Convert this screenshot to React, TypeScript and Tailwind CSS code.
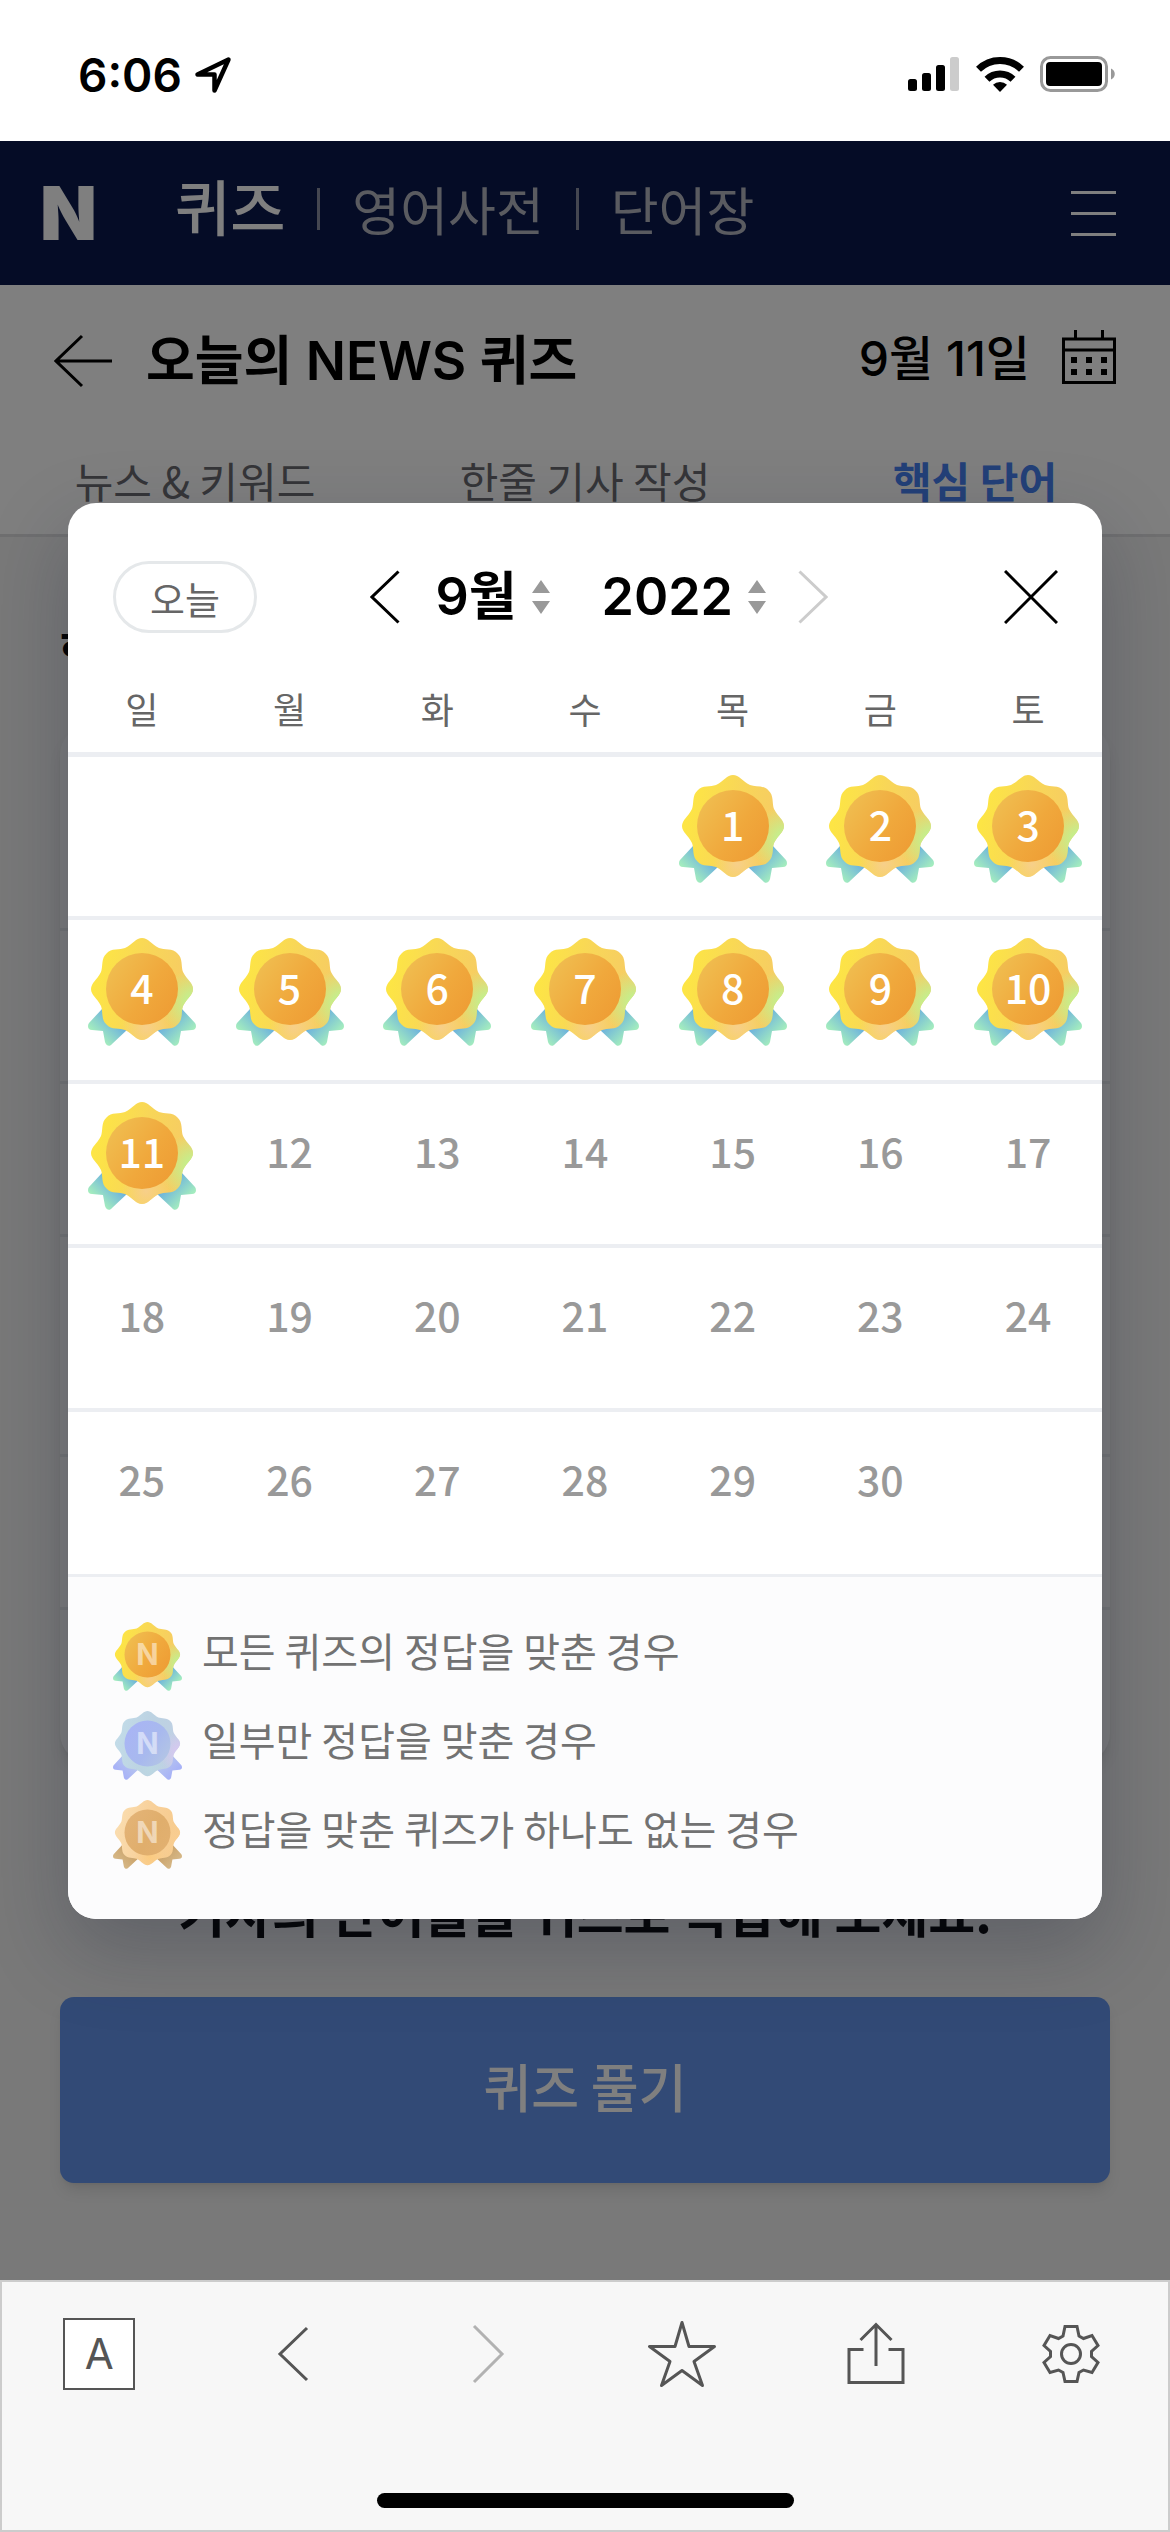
import { useId, useState } from "react";

const FONT = "font-['Inter','Noto_Sans_CJK_KR',sans-serif]";
const FONT_KR = "font-['Noto_Sans_CJK_KR',sans-serif]";

type Tone = "gold" | "blue" | "bronze";

const TONES: Record<Tone, { star: string[]; side: string; foot: string; disc: string[]; ribbon: string[] }> = {
  gold: {
    star: ["#fde545", "#f8d658", "#f6c966"],
    side: "#c3f08e",
    foot: "#f7cf8a",
    disc: ["#f0c052", "#f0a83c", "#ee9c34"],
    ribbon: ["#6fb4dc", "#a6efbd"],
  },
  blue: {
    star: ["#c2dbe8", "#bcd2e2", "#c0d0e4"],
    side: "#d6c8f0",
    foot: "#bcd8e2",
    disc: ["#a9b4f6", "#a8b9ee", "#b4c6e4"],
    ribbon: ["#b4c2f0", "#a6b0f8"],
  },
  bronze: {
    star: ["#fadcae", "#f8d09a", "#f6ca8c"],
    side: "#f9cd90",
    foot: "#fbcb80",
    disc: ["#e4b478", "#e0ae6c", "#e2b070"],
    ribbon: ["#cba46c", "#d6b888"],
  },
};

const STAR_PATH =
  "M0-51C6-51 9-45 17-41C22-39 31-41 35.5-35.5C41-31 39-22 41-17C45-9 51-6 51 0" +
  "C51 6 45 9 41 17C39 22 41 31 35.5 35.5C31 41 22 39 17 41C9 45 6 51 0 51" +
  "C-6 51-9 45-17 41C-22 39-31 41-35.5 35.5C-41 31-39 22-41 17C-45 9-51 6-51 0" +
  "C-51-6-45-9-41-17C-39-22-41-31-35.5-35.5C-31-41-22-39-17-41C-9-45-6-51 0-51Z";

const RIBBON_PATH = "M14 71L1 85C-1 88 0 92 4 92L15 93L17 104C18 108 22 109 24 106L40 91Z";

function Medal({ tone, letter, className }: { tone: Tone; letter?: string; className: string }) {
  const id = useId();
  const t = TONES[tone];
  return (
    <svg viewBox="0 0 108 108" className={className} aria-hidden="true">
      <defs>
        <linearGradient id={`${id}star`} x1="0" y1="0.4" x2="1" y2="0.6">
          <stop offset="0.05" stopColor={t.star[0]} />
          <stop offset="0.5" stopColor={t.star[1]} />
          <stop offset="1" stopColor={t.star[2]} />
        </linearGradient>
        <radialGradient id={`${id}side`} gradientUnits="userSpaceOnUse" cx="52" cy="14" r="34">
          <stop offset="0.2" stopColor={t.side} />
          <stop offset="1" stopColor={t.side} stopOpacity="0" />
        </radialGradient>
        <radialGradient id={`${id}foot`} gradientUnits="userSpaceOnUse" cx="4" cy="38" r="24">
          <stop offset="0" stopColor={t.foot} />
          <stop offset="1" stopColor={t.foot} stopOpacity="0" />
        </radialGradient>
        <linearGradient id={`${id}disc`} x1="0" y1="0.1" x2="1" y2="0.8">
          <stop offset="0" stopColor={t.disc[0]} />
          <stop offset="0.6" stopColor={t.disc[1]} />
          <stop offset="1" stopColor={t.disc[2]} />
        </linearGradient>
        <linearGradient id={`${id}ribbon`} gradientUnits="userSpaceOnUse" x1="26" y1="82" x2="9" y2="99">
          <stop offset="0" stopColor={t.ribbon[0]} />
          <stop offset="1" stopColor={t.ribbon[1]} />
        </linearGradient>
      </defs>
      <path d={RIBBON_PATH} fill={`url(#${id}ribbon)`} />
      <path d={RIBBON_PATH} fill={`url(#${id}ribbon)`} transform="matrix(-1 0 0 1 108 0)" />
      <g transform="translate(54 51)">
        <path d={STAR_PATH} fill={`url(#${id}star)`} />
        <path d={STAR_PATH} fill={`url(#${id}side)`} />
        <path d={STAR_PATH} fill={`url(#${id}foot)`} />
        <circle r="36" fill={`url(#${id}disc)`} />
        {letter && (
          <text y="17" textAnchor="middle" fontSize="46" fontWeight="700" fill="#fff" fillOpacity="0.5">
            {letter}
          </text>
        )}
      </g>
    </svg>
  );
}

function StatusBar() {
  return (
    <div className="flex h-[141px] items-start justify-between bg-white pt-[50px] pr-[54px] pl-[78px]">
      <div className="flex items-center gap-3">
        <span className="text-[46px] leading-[50px] font-semibold">6:06</span>
        <svg viewBox="0 0 38 38" className="size-[38px]" fill="none" stroke="#000" strokeWidth="4.5" strokeLinejoin="round">
          <path d="M34.500 3.500L3.500 18.500H20.500V34.500Z" />
        </svg>
      </div>
      <div className="flex h-12 items-center gap-4">
        <svg viewBox="0 0 52 36" className="h-9 w-[52px]">
          <rect x="0" y="23" width="9" height="12" rx="2.500" />
          <rect x="14" y="17" width="9" height="18" rx="2.500" />
          <rect x="28" y="9" width="9" height="26" rx="2.500" />
          <rect x="42" y="1" width="9" height="34" rx="2.500" fill="#ccc" />
        </svg>
        <svg viewBox="0 0 48 36" className="h-9 w-12">
          <path d="M24 36l-7-7.200a10 10 0 0 1 14 0z" />
          <path d="M11 23.200a18.600 18.600 0 0 1 26 0" fill="none" stroke="#000" strokeWidth="7" />
          <path d="M2.500 13.300a30.500 30.500 0 0 1 43 0" fill="none" stroke="#000" strokeWidth="7" />
        </svg>
        <svg viewBox="0 0 76 36" className="h-9 w-[76px]">
          <rect x="1.500" y="1.500" width="65" height="33" rx="9" fill="none" stroke="#999" strokeWidth="3" />
          <rect x="6" y="6" width="56" height="24" rx="4" />
          <path d="M71 12.500c5 2 5 9 0 11z" fill="#999" />
        </svg>
      </div>
    </div>
  );
}

function SiteHeader() {
  return (
    <header className="flex h-36 items-center bg-[#0a184c] pr-[54px] pl-10">
      <a href="#" className="text-[74px] leading-[144px] font-black text-white">
        N
      </a>
      <nav className={`ml-[78px] flex items-center pb-2 text-[52px] leading-[60px] ${FONT_KR}`}>
        <a href="#" className="pb-2 text-[60px] font-medium text-white">
          퀴즈
        </a>
        <span className="mx-8 h-[42px] w-[3px] bg-[#8a8ea2]" />
        <a href="#" className="font-normal text-[#b4b6c0]">
          영어사전
        </a>
        <span className="mx-8 h-[42px] w-[3px] bg-[#8a8ea2]" />
        <a href="#" className="font-normal text-[#b4b6c0]">
          단어장
        </a>
      </nav>
      <button aria-label="메뉴" className="ml-auto flex flex-col gap-[18px]">
        <span className="h-[3px] w-[45px] bg-white" />
        <span className="h-[3px] w-[45px] bg-white" />
        <span className="h-[3px] w-[45px] bg-white" />
      </button>
    </header>
  );
}

function QuizPage() {
  const rows = ["h-[206px]", "h-[153px]", "h-[153px]", "h-[220px]", "h-[153px]", "h-[153px]"];
  return (
    <div className="bg-[#f2f2f2]">
      <SiteHeader />
      <div className="bg-white">
        <div className="flex h-[152px] items-center pr-[54px] pl-[54px]">
          <button aria-label="뒤로">
            <svg viewBox="0 0 58 54" className="h-[54px] w-[58px]" fill="none" stroke="#000" strokeWidth="3">
              <path d="M28 2L2 27l26 25M2 27h56" />
            </svg>
          </button>
          <h1 className="ml-[34px] text-[53px] leading-[60px] font-semibold">오늘의 NEWS 퀴즈</h1>
          <span className="ml-auto pb-1 text-[48px] leading-[60px] font-medium">9월 11일</span>
          <button aria-label="달력" className="ml-8 pb-2">
            <svg viewBox="0 0 54 54" className="size-[54px]" fill="none" stroke="#000" strokeWidth="3">
              <path d="M1.500 9h51v43.500h-51zM1.500 20h51M13.500 0v9M40.500 0v9" />
              <g fill="#000" stroke="none">
                <path d="M9 27h6v6H9zM24 27h6v6h-6zM39 27h6v6h-6zM9 39h6v6H9zM24 39h6v6h-6zM39 39h6v6h-6z" />
              </g>
            </svg>
          </button>
        </div>
        <nav className={`grid h-[100px] grid-cols-3 border-b-3 border-[#dfdfe0] text-center text-[42px] leading-[86px] text-[#6a6b70] ${FONT_KR}`}>
          <a href="#">뉴스 &amp; 키워드</a>
          <a href="#">한줄 기사 작성</a>
          <a href="#" className="font-bold text-[#4680f0]">
            핵심 단어
          </a>
        </nav>
      </div>
      <div className="px-[60px] pt-[86px] pb-24">
        <h2 className="text-[48px] leading-[60px] font-bold">핵심 단어</h2>
        <div className="mt-[42px] divide-y-3 divide-[#e4e6ea] rounded-[30px] bg-[#f7f7f8] shadow-lg">
          {rows.map((height, i) => (
            <div key={i} className={height} />
          ))}
        </div>
        <p className={`mt-[112px] text-center text-[51px] leading-[72px] font-bold ${FONT_KR}`}>
          기사의 단어들을 퀴즈로 복습해 보세요.
        </p>
        <button className={`mt-[50px] h-[186px] w-full rounded-[14px] bg-[#6494ec] pb-2 text-[52px] font-medium text-white shadow-lg ${FONT_KR}`}>
          퀴즈 풀기
        </button>
      </div>
    </div>
  );
}

function SortArrows() {
  return (
    <svg viewBox="0 0 18 34" className="h-[34px] w-[18px]" fill="#999">
      <path d="M9 0l9 13H0zM9 34l9-13H0z" />
    </svg>
  );
}

const WEEKDAYS = ["일", "월", "화", "수", "목", "금", "토"];
const WEEKS = [
  [0, 0, 0, 0, 1, 2, 3],
  [4, 5, 6, 7, 8, 9, 10],
  [11, 12, 13, 14, 15, 16, 17],
  [18, 19, 20, 21, 22, 23, 24],
  [25, 26, 27, 28, 29, 30, 0],
];
const LAST_SOLVED = 11;

const LEGEND: { tone: Tone; text: string }[] = [
  { tone: "gold", text: "모든 퀴즈의 정답을 맞춘 경우" },
  { tone: "blue", text: "일부만 정답을 맞춘 경우" },
  { tone: "bronze", text: "정답을 맞춘 퀴즈가 하나도 없는 경우" },
];

function CalendarDialog() {
  const [month, setMonth] = useState("9");
  const [year, setYear] = useState("2022");

  return (
    <div
      role="dialog"
      aria-label="달력"
      className="overflow-hidden rounded-[28px] bg-white shadow-[0_30px_80px_rgba(30,36,56,0.28)]"
    >
      <div className="flex items-center justify-between pt-[54px] pr-11 pl-[45px]">
        <button className={`w-36 ${FONT_KR}`}>
          <span className="flex h-[72px] items-center justify-center rounded-full border-3 border-[#e5e8ea] text-[38px] text-[#666]">
            오늘
          </span>
        </button>
        <div className="flex items-center pr-16">
          <button aria-label="이전 달">
            <svg viewBox="0 0 30 54" className="h-[54px] w-[30px]" fill="none" stroke="#000" strokeWidth="3">
              <path d="M28.500 1.500L2 27l26.500 25.500" />
            </svg>
          </button>
          <label className="ml-9 flex items-center">
            <select
              aria-label="월"
              value={month}
              onChange={(e) => setMonth(e.target.value)}
              className="w-[96px] appearance-none text-[52px] leading-[80px] font-semibold"
            >
              {["7", "8", "9"].map((m) => (
                <option key={m} value={m}>
                  {m}월
                </option>
              ))}
            </select>
            <SortArrows />
          </label>
          <label className="ml-[52px] flex items-center">
            <select
              aria-label="연도"
              value={year}
              onChange={(e) => setYear(e.target.value)}
              className="w-[146px] appearance-none text-[52px] leading-[80px] font-semibold"
            >
              {["2021", "2022"].map((y) => (
                <option key={y}>{y}</option>
              ))}
            </select>
            <SortArrows />
          </label>
          <button aria-label="다음 달" className="ml-8">
            <svg viewBox="0 0 30 54" className="h-[54px] w-[30px]" fill="none" stroke="#ccc" strokeWidth="3">
              <path d="M1.500 1.500L28 27L1.500 52.500" />
            </svg>
          </button>
        </div>
        <button aria-label="닫기">
          <svg viewBox="0 0 54 54" className="size-[54px]" fill="none" stroke="#000" strokeWidth="3">
            <path d="M1 1l52 52M53 1L1 53" />
          </svg>
        </button>
      </div>

      <table className={`mt-7 w-full table-fixed text-center ${FONT_KR}`}>
        <thead>
          <tr className="h-[89px] border-b-5 border-[#eceef2]">
            {WEEKDAYS.map((d) => (
              <th key={d} className="text-[36px] leading-[80px] font-normal text-[#666]">
                {d}
              </th>
            ))}
          </tr>
        </thead>
        <tbody>
          {WEEKS.map((week, w) => (
            <tr key={w} className="h-[164px] border-b-4 border-[#eceef2] last:border-b-0">
              {week.map((day, i) => (
                <td key={i} className="pt-[18px] align-top">
                  {day > 0 && (
                    <button
                      className={`relative size-[108px] text-[41px] leading-[96px] font-medium ${
                        day <= LAST_SOLVED ? "text-white" : "text-[#999]"
                      }`}
                    >
                      {day <= LAST_SOLVED && <Medal tone="gold" className="absolute inset-0 size-full" />}
                      <span className="relative block h-[108px]">{day}</span>
                    </button>
                  )}
                </td>
              ))}
            </tr>
          ))}
        </tbody>
      </table>

      <ul className="flex flex-col gap-5 border-t-3 border-[#eceef2] bg-[#fcfcfd] px-[45px] pt-[45px] pb-[50px]">
        {LEGEND.map((item) => (
          <li key={item.tone} className="flex items-start gap-5">
            <Medal tone={item.tone} letter="N" className="size-[69px]" />
            <span className={`text-[40px] leading-[56px] text-[#727272] ${FONT_KR}`}>{item.text}</span>
          </li>
        ))}
      </ul>
    </div>
  );
}

function BrowserToolbar() {
  return (
    <footer className="flex h-[252px] flex-col items-center justify-between border-2 border-[#ccc] bg-[#f7f7f7] pt-9 pb-[22px]">
      <nav className="grid w-full grid-cols-6 justify-items-center text-[#555]">
        <button className="size-[72px] border-2 border-[#555] bg-white text-[42px] leading-[68px]">A</button>
        <button aria-label="이전">
          <svg viewBox="0 0 60 72" className="h-[72px] w-[60px]" fill="none" stroke="currentColor" strokeWidth="3">
            <path d="M44 10L17 36l27 26" />
          </svg>
        </button>
        <button aria-label="다음" className="text-[#b2b2b2]">
          <svg viewBox="0 0 60 72" className="h-[72px] w-[60px]" fill="none" stroke="currentColor" strokeWidth="3">
            <path d="M16 8l28 28l-28 28" />
          </svg>
        </button>
        <button aria-label="즐겨찾기">
          <svg viewBox="0 0 72 72" className="size-[72px]" fill="none" stroke="currentColor" strokeWidth="3" strokeLinejoin="round">
            <path d="M36 4.500L43 28.500H68.500L48 43.500L56.500 67.500L36 52.500L15.500 67.500L24 43.500L3.500 28.500H29Z" />
          </svg>
        </button>
        <button aria-label="공유">
          <svg viewBox="0 0 60 72" className="h-[72px] w-[60px]" fill="none" stroke="currentColor" strokeWidth="3">
            <path d="M17.500 31.500H3v33h54v-33H42.500M30 48V6.500M14.500 22L30 6.500L45.500 22" />
          </svg>
        </button>
        <button aria-label="설정">
          <svg viewBox="0 0 60 72" className="h-[72px] w-[60px]" fill="none" stroke="currentColor" strokeWidth="3">
            <path d="M24 8.500H36L38 18L42.500 20.500L51 17.500L57 27.500L50.500 33.500V38.500L57 44.500L51 54.500L42.500 52L38 54.500L36 63.500H24L22 54.500L17.500 52L9 54.500L3 44.500L9.500 38.500V33.500L3 27.500L9 17.500L17.500 20.500L22 18Z" />
            <circle cx="30" cy="36" r="9.500" />
          </svg>
        </button>
      </nav>
      <div className="h-[15px] w-[417px] rounded-full bg-black" />
    </footer>
  );
}

export default function App() {
  return (
    <div className={`flex min-h-screen flex-col bg-white text-black ${FONT}`}>
      <StatusBar />
      <main className="relative flex-1 bg-[#f2f2f2]">
        <QuizPage />
        <div className="absolute inset-0 overflow-hidden bg-black/50 px-[68px] pt-[362px]">
          <CalendarDialog />
        </div>
      </main>
      <BrowserToolbar />
    </div>
  );
}
